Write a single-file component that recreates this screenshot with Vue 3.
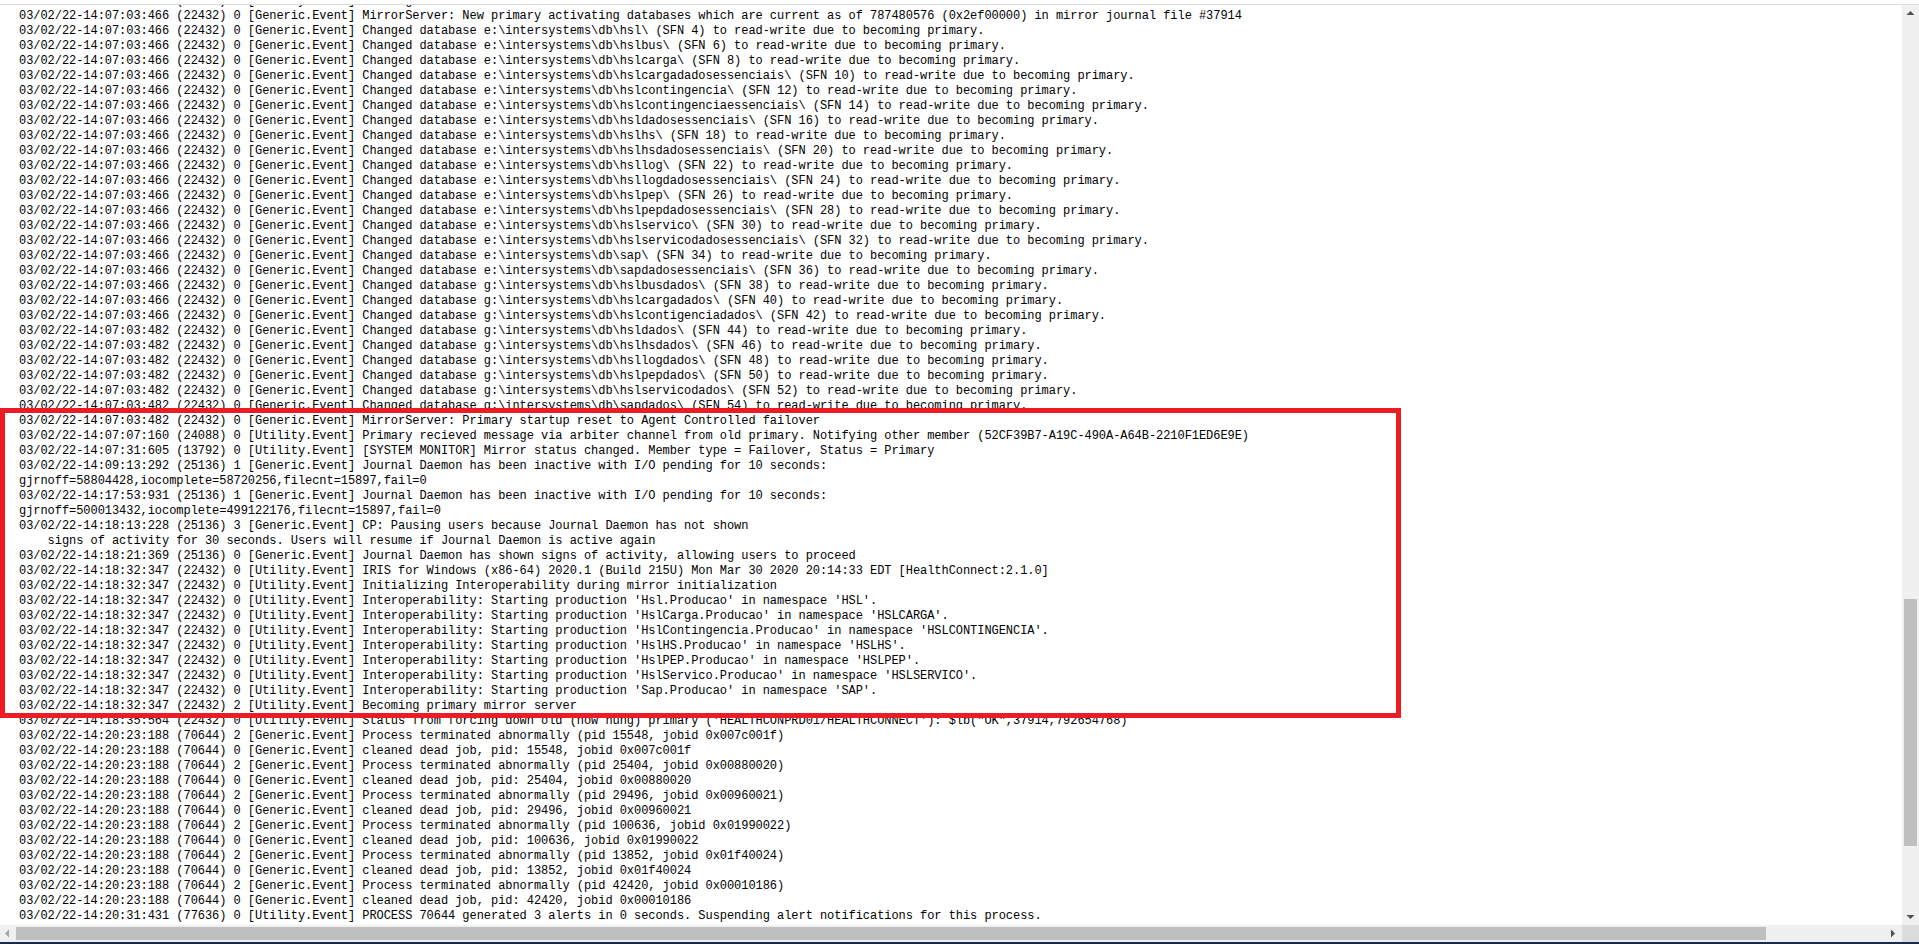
<script setup>
const ge = 'Generic.Event'
const ut = 'Utility.Event'
const head = (t, pid, lvl, cat) => `03/02/22-14:${t} (${pid}) ${lvl} [${cat}] `
const e = [['hsl',4],['hslbus',6],['hslcarga',8],['hslcargadadosessenciais',10],['hslcontingencia',12],['hslcontingenciaessenciais',14],['hsldadosessenciais',16],['hslhs',18],['hslhsdadosessenciais',20],['hsllog',22],['hsllogdadosessenciais',24],['hslpep',26],['hslpepdadosessenciais',28],['hslservico',30],['hslservicodadosessenciais',32],['sap',34],['sapdadosessenciais',36]]
const g = [['hslbusdados',38],['hslcargadados',40],['hslcontigenciadados',42],['hsldados',44],['hslhsdados',46],['hsllogdados',48],['hslpepdados',50],['hslservicodados',52],['sapdados',54]]
const changed = (d, n, s) => `Changed database ${d}:\\intersystems\\db\\${n}\\ (SFN ${s}) to read-write due to becoming primary.`
const prods = [['Hsl','HSL'],['HslCarga','HSLCARGA'],['HslContingencia','HSLCONTINGENCIA'],['HslHS','HSLHS'],['HslPEP','HSLPEP'],['HslServico','HSLSERVICO'],['Sap','SAP']]
const jobs = [[15548,'0x007c001f'],[25404,'0x00880020'],[29496,'0x00960021'],[100636,'0x01990022'],[13852,'0x01f40024'],[42420,'0x00010186']]

const lines = [
  head('07:03:450', 22432, 0, ut) + 'Waiting',
  head('07:03:466', 22432, 0, ge) + 'MirrorServer: New primary activating databases which are current as of 787480576 (0x2ef00000) in mirror journal file #37914',
  ...e.map(([n, s]) => head('07:03:466', 22432, 0, ge) + changed('e', n, s)),
  ...g.map(([n, s]) => head(s <= 42 ? '07:03:466' : '07:03:482', 22432, 0, ge) + changed('g', n, s)),
  head('07:03:482', 22432, 0, ge) + 'MirrorServer: Primary startup reset to Agent Controlled failover',
  head('07:07:160', 24088, 0, ut) + 'Primary recieved message via arbiter channel from old primary. Notifying other member (52CF39B7-A19C-490A-A64B-2210F1ED6E9E)',
  head('07:31:605', 13792, 0, ut) + '[SYSTEM MONITOR] Mirror status changed. Member type = Failover, Status = Primary',
  head('09:13:292', 25136, 1, ge) + 'Journal Daemon has been inactive with I/O pending for 10 seconds:',
  'gjrnoff=58804428,iocomplete=58720256,filecnt=15897,fail=0',
  head('17:53:931', 25136, 1, ge) + 'Journal Daemon has been inactive with I/O pending for 10 seconds:',
  'gjrnoff=500013432,iocomplete=499122176,filecnt=15897,fail=0',
  head('18:13:228', 25136, 3, ge) + 'CP: Pausing users because Journal Daemon has not shown',
  '    signs of activity for 30 seconds. Users will resume if Journal Daemon is active again',
  head('18:21:369', 25136, 0, ge) + 'Journal Daemon has shown signs of activity, allowing users to proceed',
  head('18:32:347', 22432, 0, ut) + 'IRIS for Windows (x86-64) 2020.1 (Build 215U) Mon Mar 30 2020 20:14:33 EDT [HealthConnect:2.1.0]',
  head('18:32:347', 22432, 0, ut) + 'Initializing Interoperability during mirror initialization',
  ...prods.map(([p, n]) => head('18:32:347', 22432, 0, ut) + `Interoperability: Starting production '${p}.Producao' in namespace '${n}'.`),
  head('18:32:347', 22432, 2, ut) + 'Becoming primary mirror server',
  head('18:35:564', 22432, 0, ut) + `Status from forcing down old (now hung) primary ('HEALTHCONPRD01/HEALTHCONNECT'): $lb("OK",37914,792654768)`,
  ...jobs.flatMap(([p, j]) => [
    head('20:23:188', 70644, 2, ge) + `Process terminated abnormally (pid ${p}, jobid ${j})`,
    head('20:23:188', 70644, 0, ge) + `cleaned dead job, pid: ${p}, jobid ${j}`
  ]),
  head('20:31:431', 77636, 0, ut) + 'PROCESS 70644 generated 3 alerts in 0 seconds. Suspending alert notifications for this process.'
]
</script>

<template>
  <div class="page">
    <div class="topline"></div>
    <div class="middle">
      <div class="viewport">
        <div class="log">
          <div v-for="(line, i) in lines" :key="i" class="row">{{ line }}</div>
        </div>
        <div class="highlight"></div>
      </div>
      <div class="vtrack">
        <svg class="arrow" width="17" height="17" viewBox="0 0 17 17"><path d="M8.5 6 L12.5 10 H4.5 Z" fill="#505050" /></svg>
        <div class="vthumb"></div>
        <svg class="arrow down" width="17" height="17" viewBox="0 0 17 17"><path d="M4.5 7 H12.5 L8.5 11 Z" fill="#505050" /></svg>
      </div>
    </div>
    <div class="bottom">
      <div class="htrack">
        <svg class="arrow" width="16" height="17" viewBox="0 0 16 17"><path d="M5 8.5 L9 4.5 V12.5 Z" fill="#a3a3a3" /></svg>
        <div class="hthumb"></div>
        <svg class="arrow right" width="17" height="17" viewBox="0 0 17 17"><path d="M6 4.5 L10 8.5 L6 12.5 Z" fill="#505050" /></svg>
      </div>
      <div class="corner"></div>
    </div>
    <div class="taskbar"></div>
  </div>
</template>

<style scoped>
.page {
  display: flex;
  flex-direction: column;
  width: 1919px;
  height: 944px;
  overflow: hidden;
  background: #fff;
}
.topline {
  height: 4px;
  flex: none;
  border-bottom: 1px solid #dcdcdc;
}
.middle {
  display: flex;
  flex: 1;
  min-height: 0;
}
.viewport {
  position: relative;
  flex: 1;
  min-width: 0;
  overflow: hidden;
}
.log {
  margin-top: -11px;
  padding-left: 19px;
  font-family: "Liberation Mono", monospace;
  font-size: 12px;
  letter-spacing: -0.05px;
  line-height: 15px;
  color: #000;
}
.row {
  height: 15px;
  white-space: pre;
}
.highlight {
  position: absolute;
  left: 0;
  top: 403px;
  width: 1401px;
  height: 310px;
  box-sizing: border-box;
  border: 5px solid #ed1c24;
}
.vtrack {
  display: flex;
  flex-direction: column;
  flex: none;
  width: 17px;
  background: #f0f0f0;
}
.vthumb {
  flex: none;
  width: 13px;
  height: 247px;
  margin: 577px 0 0 2px;
  background: #bfbfbf;
}
.arrow {
  display: block;
  flex: none;
}
.arrow.down {
  margin-top: auto;
}
.arrow.right {
  margin-left: auto;
}
.bottom {
  display: flex;
  flex: none;
  height: 17px;
}
.htrack {
  display: flex;
  align-items: center;
  flex: 1;
  background: #f0f0f0;
}
.hthumb {
  flex: none;
  width: 1750px;
  height: 13px;
  background: #bfbfbf;
}
.corner {
  flex: none;
  width: 17px;
  background: #dcdcdc;
}
.taskbar {
  flex: none;
  height: 2px;
  background: #1b2a4a;
}
</style>

<style>
html, body {
  margin: 0;
  overflow: hidden;
}
</style>
